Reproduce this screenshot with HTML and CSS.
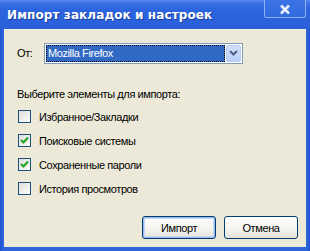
FILE: index.html
```html
<!DOCTYPE html>
<html>
<head>
<meta charset="utf-8">
<link rel="stylesheet" href="styles.css">
</head>
<body>
<div class="window">
  <div class="titlebar">
    <span class="title">Импорт закладок и настроек</span>
    <span class="close">
      <svg width="12" height="11" viewBox="0 0 12 11"><path d="M2 1.5 L10 9.5 M10 1.5 L2 9.5" stroke="#9db8ee" stroke-width="3.2" fill="none"/><path d="M2 1.5 L10 9.5 M10 1.5 L2 9.5" stroke="#fff" stroke-width="1.5" fill="none"/></svg>
    </span>
  </div>
  <div class="client">
    <div class="from-row">
      <span class="label">От:</span>
      <div class="select">
        <div class="select-value"><span class="sel-text">Mozilla Firefox</span></div>
        <div class="select-btn">
          <svg width="9" height="6" viewBox="0 0 9 6"><path d="M1 1 L4.5 4.5 L8 1" stroke="#4d6185" stroke-width="2" fill="none"/></svg>
        </div>
      </div>
    </div>
    <div class="prompt">Выберите элементы для импорта:</div>
    <div class="items">
      <label class="item"><span class="cb"></span><span>Избранное/Закладки</span></label>
      <label class="item"><span class="cb checked"><svg width="9" height="9" viewBox="0 0 9 9"><path d="M1 4 L3.5 6.5 L8 1.5" stroke="#21a121" stroke-width="2" fill="none"/></svg></span><span>Поисковые системы</span></label>
      <label class="item"><span class="cb checked"><svg width="9" height="9" viewBox="0 0 9 9"><path d="M1 4 L3.5 6.5 L8 1.5" stroke="#21a121" stroke-width="2" fill="none"/></svg></span><span>Сохраненные пароли</span></label>
      <label class="item"><span class="cb"></span><span>История просмотров</span></label>
    </div>
    <div class="buttons">
      <button class="btn default">Импорт</button>
      <button class="btn">Отмена</button>
    </div>
  </div>
</div>
</body>
</html>
```
FILE: styles.css
```css
html, body {
  margin: 0;
  padding: 0;
  background: #2c5fd8;
}
.window {
  width: 310px;
  height: 251px;
  box-sizing: border-box;
  display: flex;
  flex-direction: column;
  background: linear-gradient(to right, #1f50cc, #2e64dc 3px, #2e64dc calc(100% - 3px), #1f4fc8);
  padding: 0 4px 4px 4px;
  font-family: "Liberation Sans", Arial, sans-serif;
  font-size: 11px;
  letter-spacing: -0.4px;
  color: #000;
}
.titlebar {
  height: 29px;
  margin: 0 -4px;
  padding: 0 6px 0 7px;
  display: flex;
  align-items: center;
  justify-content: space-between;
  background: linear-gradient(to bottom, #5b8cf0 0px, #3a72e6 3px, #2c63de 10px, #2b62dc 22px, #2a5fd8 29px);
  box-sizing: border-box;
}
.title {
  color: #fff;
  font-family: "DejaVu Sans", sans-serif;
  font-weight: bold;
  font-size: 12px;
  letter-spacing: 0.1px;
  text-shadow: 1px 1px 0 #1b3f9c;
  margin-top: 1px;
}
.close {
  align-self: flex-start;
  width: 42px;
  height: 18px;
  margin-right: -2px;
  box-sizing: border-box;
  border: 1px solid #8fb0f0;
  border-top: none;
  border-radius: 0 0 3px 3px;
  background: linear-gradient(to bottom, #3c74e6, #3068e0);
  display: flex;
  align-items: center;
  justify-content: center;
  padding-top: 2px;
}
.client {
  flex: 1;
  background: #ece9d8;
  border-top: 1px solid #f4f2e8;
  padding: 11px 13px 0 13px;
  display: flex;
  flex-direction: column;
}
.from-row {
  display: flex;
  align-items: center;
  height: 22px;
  margin-top: 1px;
}
.label {
  width: 27px;
}
.select {
  width: 199px;
  height: 21px;
  box-sizing: border-box;
  border: 1px solid #7f9db9;
  background: #fff;
  display: flex;
  padding: 1px;
}
.select-value {
  flex: 1;
  background: #316ac5;
  outline: 1px dotted #000;
  outline-offset: -1px;
  display: flex;
  align-items: center;
  margin-right: 1px;
}
.sel-text {
  color: #fff;
  padding-left: 2px;
}
.select-btn {
  width: 15px;
  box-sizing: border-box;
  border: 1px solid #b9cdf7;
  border-radius: 2px;
  background: linear-gradient(to bottom, #d3e0fc, #b9cef9);
  display: flex;
  align-items: center;
  justify-content: center;
}
.prompt {
  margin-top: 24px;
}
.items {
  display: flex;
  flex-direction: column;
  gap: 11px;
  margin-top: 10px;
}
.item {
  display: flex;
  align-items: center;
  gap: 8px;
  height: 13px;
  margin-left: 1px;
}
.cb {
  width: 13px;
  height: 13px;
  box-sizing: border-box;
  border: 1px solid #1c5180;
  background: linear-gradient(135deg, #dcdcd7, #fdfdfb);
  display: flex;
  align-items: center;
  justify-content: center;
}
.buttons {
  display: flex;
  justify-content: flex-end;
  gap: 8px;
  margin-top: auto;
  margin-bottom: 8px;
  margin-right: -5px;
}
.btn {
  width: 74px;
  height: 23px;
  font-family: "Liberation Sans", Arial, sans-serif;
  font-size: 11px;
  letter-spacing: -0.4px;
  color: #000;
  border: 1px solid #003c74;
  border-radius: 3px;
  background: linear-gradient(to bottom, #fefefe, #f4f3ee 60%, #e3e1d8);
  padding: 0;
}
.btn.default {
  box-shadow: inset 0 0 0 1px #9ab9ec, inset 0 0 0 2px #c5d8f6;
}
```
